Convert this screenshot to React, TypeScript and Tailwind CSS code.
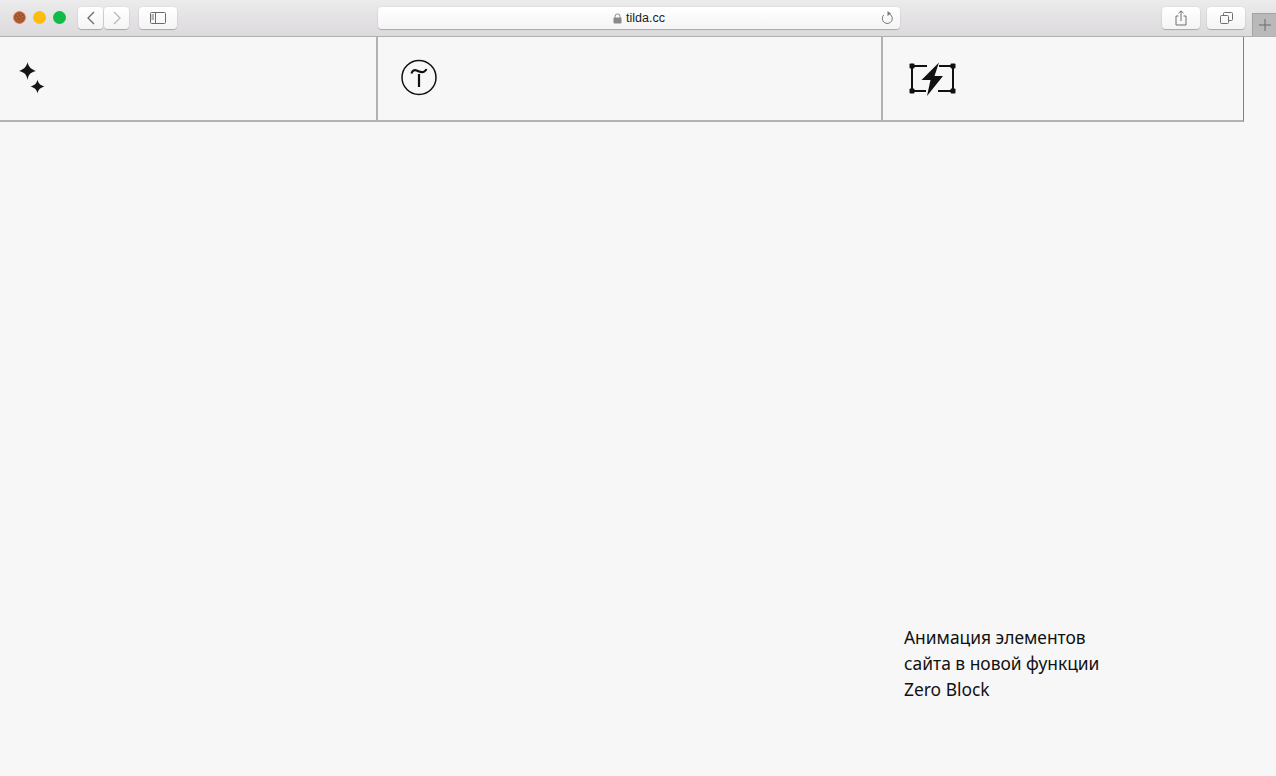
function Btn({ className, children }: { className: string; children?: React.ReactNode }) {
  return (
    <div className={`h-[22px] flex items-center justify-center rounded-[4px] bg-gradient-to-b from-[#ffffff] to-[#f5f4f5] shadow-[0_1px_1px_rgba(0,0,0,0.22),0_0_0_0.5px_rgba(0,0,0,0.06)] ${className}`}>
      {children}
    </div>
  );
}

export default function App() {
  return (
    <div className="w-[1276px] h-[776px] overflow-hidden bg-[#f7f7f7] flex flex-col font-['Liberation_Sans',sans-serif]">
      {/* Safari toolbar */}
      <div className="h-[37px] shrink-0 flex items-start bg-gradient-to-b from-[#ececec] to-[#dcdadc] border-b border-[#b1b1b1] relative">
        <div className="flex items-center gap-[7px] ml-[13px] mt-[11px]">
          <svg width="13" height="13" viewBox="0 0 13 13" className="block">
            <circle cx="6.500" cy="6.500" r="6" fill="#a2562c" stroke="#e8806c" strokeWidth="1" />
            <path d="M4 4h.8M7 3.500h.8M9 5.500h.8M3 7h.8M6 6.500h.8M8.500 8h.8M4.500 9.500h.8M7 10h.8" stroke="#d08a5a" strokeWidth="1" />
          </svg>
          <span className="w-[13px] h-[13px] rounded-full bg-[#fdbc12]" />
          <span className="w-[13px] h-[13px] rounded-full bg-[#10bb47]" />
        </div>
        <div className="flex mt-[7px] ml-[12px] gap-px">
          <Btn className="w-[25px]">
            <svg width="10" height="14" viewBox="0 0 10 14" fill="none" stroke="#6a6a6a" strokeWidth="1.300"><path d="M8 1 2 7l6 6" /></svg>
          </Btn>
          <Btn className="w-[25px]">
            <svg width="10" height="14" viewBox="0 0 10 14" fill="none" stroke="#b9b9b9" strokeWidth="1.300"><path d="m2 1 6 6-6 6" /></svg>
          </Btn>
        </div>
        <Btn className="w-[38px] ml-[10px] mt-[7px]">
          <svg width="16" height="12" viewBox="0 0 16 12" fill="none" stroke="#6a6a6a" strokeWidth="1"><rect x="0.500" y="0.500" width="15" height="11" rx="1" /><path d="M5.500 0.500v11M1.500 3h2.500M1.500 5h2.500M1.500 7h2.500" /></svg>
        </Btn>
        <Btn className="w-[522px] ml-[201px] mt-[7px] relative">
          <div className="flex items-center gap-[4px] text-[12.5px] text-[#1d1d1d]">
            <svg width="9" height="11" viewBox="0 0 9 11"><path d="M2 5V3.400a2.500 2.500 0 0 1 5 0V5" fill="none" stroke="#8a8a8a" strokeWidth="1" /><rect x="0.500" y="4.500" width="8" height="6" rx="1" fill="#8a8a8a" /></svg>
            <span>tilda.cc</span>
          </div>
          <svg className="absolute right-[6px] top-[4px]" width="13" height="14" viewBox="0 0 13 14" fill="none" stroke="#7a7a7a" strokeWidth="1"><path d="M8.500 3a5 5 0 1 1-5.800 1" /><path d="M6.500 0v5l3.500-2.500z" fill="#7a7a7a" stroke="none" /></svg>
        </Btn>
        <Btn className="w-[38px] ml-[262px] mt-[7px]">
          <svg width="12" height="16" viewBox="0 0 12 16" fill="none" stroke="#6f6f6f" strokeWidth="1"><path d="M3.500 6H1v9h10V6H8.500M6 11V1M3.500 3.200 6 .8l2.500 2.400" /></svg>
        </Btn>
        <Btn className="w-[38px] ml-[7px] mt-[7px]">
          <svg width="13" height="12" viewBox="0 0 13 12" fill="none" stroke="#6f6f6f" strokeWidth="1"><rect x="0.500" y="3.500" width="8" height="8" rx="1" /><path d="M3.500 3V1.500a1 1 0 0 1 1-1h7a1 1 0 0 1 1 1v6a1 1 0 0 1-1 1H9" /></svg>
        </Btn>
        <div className="absolute right-0 top-[13px] w-[24px] h-[23px] bg-[#b9b9b9] border-l border-t border-[#a3a3a3] flex items-center justify-center">
          <svg width="12" height="12" viewBox="0 0 12 12" stroke="#6a6a6a" strokeWidth="1"><path d="M6 0v12M0 6h12" /></svg>
        </div>
      </div>

      {/* Page header row */}
      <div className="w-[1244px] h-[85px] shrink-0 flex border-b-2 border-r border-b-[#b2b2b2] border-r-[#808080]">
        <div className="w-[378px] shrink-0 border-r-2 border-[#b2b2b2] pl-[18px] pt-[24px]">
          <svg width="29" height="36" viewBox="0 0 29 36" fill="#161616" className="block blur-[0.6px]">
            <path d="M9.500 1c1 4.700 3 6.700 8.500 9-5.500 1.300-7.500 3.300-8.500 9-1-5.700-3-7.700-8.500-9 5.500-2.300 7.500-4.300 8.500-9z" />
            <path d="M19.500 18.500c.8 4 2.500 5.500 7 7-4.500 1.500-6.200 3-7 7-.8-4-2.500-5.500-7-7 4.500-1.500 6.200-3 7-7z" />
          </svg>
        </div>
        <div className="w-[505px] shrink-0 border-r-2 border-[#b2b2b2] pl-[23px] pt-[22px]">
          <svg width="37" height="37" viewBox="0 0 37 37" fill="none" stroke="#111" className="block blur-[0.3px]">
            <circle cx="18" cy="18.500" r="17" strokeWidth="1.500" />
            <path d="M18 15v13" strokeWidth="2.200" />
            <path d="M10.500 14.500c.8-3 2.800-3.800 5.200-3 2.500 1 4.800 2.300 7.200 1.300 1.100-.5 2-1.300 2.500-2.800" strokeWidth="2.200" />
          </svg>
        </div>
        <div className="flex-1 pl-[26px] pt-[25px]">
          <svg width="47" height="34" viewBox="0 0 47 34" fill="none" stroke="#111" className="block blur-[0.3px]">
            <path d="M3 4h15M30 4h14M3 29h14M29 29h15M3 4v25M44 4v25" strokeWidth="2" />
            <rect x="0.500" y="1.500" width="5" height="5" rx="1" fill="#111" stroke="none" />
            <rect x="41.500" y="1.500" width="5" height="5" rx="1" fill="#111" stroke="none" />
            <rect x="0.500" y="26.500" width="5" height="5" rx="1" fill="#111" stroke="none" />
            <rect x="41.500" y="26.500" width="5" height="5" rx="1" fill="#111" stroke="none" />
            <path d="M30 0.500 12.500 18h9L18 34 34 14h-8.500z" fill="#111" stroke="none" />
          </svg>
        </div>
      </div>

      {/* Caption */}
      <div className="flex-1 pt-[502px] pl-[904px]">
        <p className="font-['Noto_Sans',sans-serif] text-[17.4px] leading-[26px] text-[#111] whitespace-nowrap">
          Анимация элементов
          <br />
          сайта в новой функции
          <br />
          Zero Block
        </p>
      </div>
    </div>
  );
}
